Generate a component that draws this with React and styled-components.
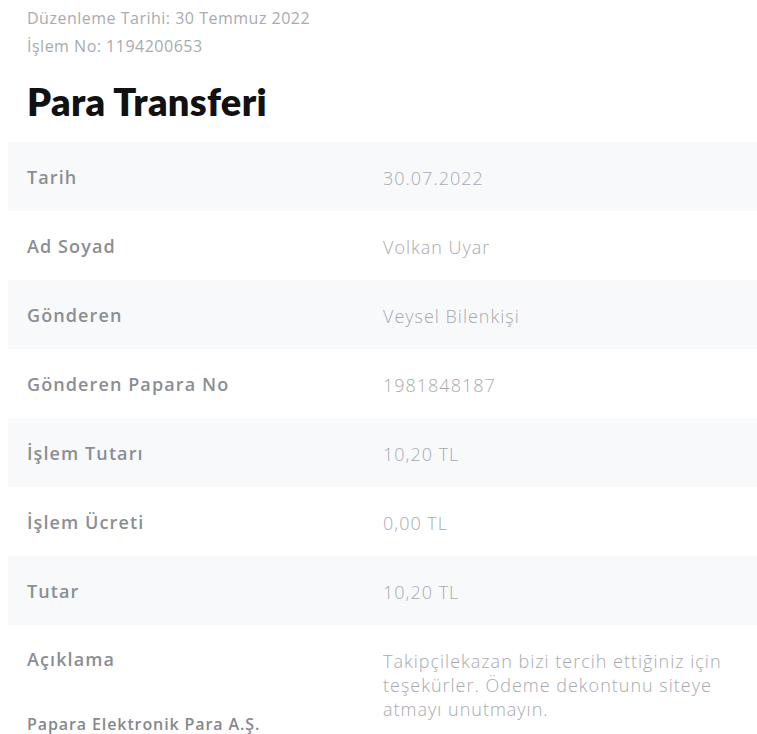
import styled, { createGlobalStyle } from 'styled-components';

const GlobalStyle = createGlobalStyle`
  body {
    margin: 0;
    background: #ffffff;
    font-family: "Open Sans", "Noto Sans", sans-serif;
  }
`;

const Page = styled.main`
  padding-top: 4px;
`;

const Header = styled.header`
  padding-left: 27px;
`;

const Meta = styled.div`
  font-size: 16px;
  line-height: 28px;
  font-weight: 400;
  color: #a9abae;
  letter-spacing: 0.5px;
`;

const Title = styled.h1`
  margin: 18px 0 0;
  font-family: Lato, sans-serif;
  font-size: 38px;
  line-height: 46px;
  font-weight: 800;
  color: #111111;
  letter-spacing: 0.3px;
`;

const Table = styled.div`
  margin: 18px 0 0 8px;
`;

const Row = styled.div`
  display: grid;
  grid-template-columns: 375px 1fr;
  align-items: ${(p) => (p.$tall ? 'start' : 'center')};
  min-height: 69px;
  padding: ${(p) => (p.$tall ? '22px 0 0' : '0')};
  box-sizing: border-box;
  background: ${(p) => (p.$shaded ? '#f8f9fa' : '#ffffff')};
`;

const Label = styled.div`
  padding-left: 19px;
  font-size: 18px;
  line-height: 24px;
  font-weight: 600;
  color: #8b8e94;
  letter-spacing: 1.1px;
`;

const Value = styled.div`
  padding-top: 2px;
  padding-right: 24px;
  font-size: 18px;
  line-height: 24px;
  font-weight: 300;
  color: #a7aaaf;
  letter-spacing: 1px;
`;

const Company = styled.div`
  margin-top: 41px;
  font-size: 16px;
  font-weight: 600;
  color: #85888e;
  letter-spacing: 0.9px;
`;

const rows = [
  ['Tarih', '30.07.2022'],
  ['Ad Soyad', 'Volkan Uyar'],
  ['Gönderen', 'Veysel Bilenkişi'],
  ['Gönderen Papara No', '1981848187'],
  ['İşlem Tutarı', '10,20 TL'],
  ['İşlem Ücreti', '0,00 TL'],
  ['Tutar', '10,20 TL'],
];

export default function App() {
  return (
    <Page>
      <GlobalStyle />
      <Header>
        <Meta>Düzenleme Tarihi: 30 Temmuz 2022</Meta>
        <Meta>İşlem No: 1194200653</Meta>
        <Title>Para Transferi</Title>
      </Header>
      <Table>
        {rows.map(([label, value], i) => (
          <Row key={label} $shaded={i % 2 === 0}>
            <Label>{label}</Label>
            <Value>{value}</Value>
          </Row>
        ))}
        <Row $tall>
          <Label>
            Açıklama
            <Company>Papara Elektronik Para A.Ş.</Company>
          </Label>
          <Value>
            Takipçilekazan bizi tercih ettiğiniz için teşekürler. Ödeme dekontunu siteye atmayı unutmayın.
          </Value>
        </Row>
      </Table>
    </Page>
  );
}
